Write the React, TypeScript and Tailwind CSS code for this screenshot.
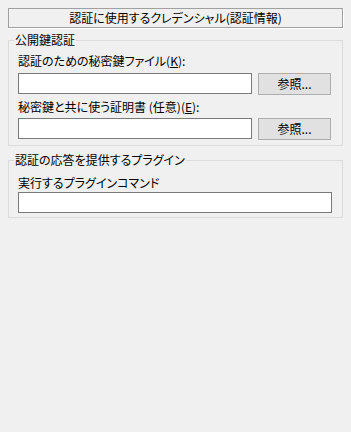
export default function App() {
  const font = "[font-family:'Noto_Sans_CJK_JP','Noto_Sans',sans-serif] [font-feature-settings:'palt']"

  return (
    <div className={`w-[351px] h-[432px] bg-[#f0f0f0] px-2 pt-2 text-[12px] text-black ${font}`}>
      <div className="h-[20px] border border-[#a0a0a0] shadow-[1px_1px_0_#ffffff] flex items-center justify-center leading-[16px]">
        認証に使用するクレデンシャル(認証情報)
      </div>

      <fieldset className="mt-[4px] border border-[#dcdcdc] pl-[9px] pr-[10px] pb-[5px]">
        <legend className="-ml-[4px] px-[1px] leading-[16px]">公開鍵認証</legend>
        <div className="mt-[5px] leading-[16px]">
          認証のための秘密鍵ファイル(<span className="underline">K</span>):
        </div>
        <div className="mt-[4px] flex items-start gap-[6px]">
          <input className="w-[234px] h-[21px] bg-white border border-[#7a7a7a] outline-none" />
          <button className="w-[73px] h-[22px] bg-[#e1e1e1] border border-[#adadad] leading-[16px]">参照...</button>
        </div>
        <div className="mt-[4px] leading-[16px]">
          秘密鍵と共に使う証明書 (任意)(<span className="underline">E</span>):
        </div>
        <div className="mt-[3px] flex items-start gap-[6px]">
          <input className="w-[234px] h-[21px] bg-white border border-[#7a7a7a] outline-none" />
          <button className="w-[73px] h-[22px] bg-[#e1e1e1] border border-[#adadad] leading-[16px]">参照...</button>
        </div>
      </fieldset>

      <fieldset className="mt-[6px] border border-[#dcdcdc] pl-[9px] pr-[10px] pb-[4px]">
        <legend className="-ml-[4px] px-[1px] leading-[16px]">認証の応答を提供するプラグイン</legend>
        <div className="mt-[7px] leading-[16px]">実行するプラグインコマンド</div>
        <div className="mt-[1px]">
          <input className="w-[314px] h-[21px] bg-white border border-[#7a7a7a] outline-none" />
        </div>
      </fieldset>
    </div>
  )
}
